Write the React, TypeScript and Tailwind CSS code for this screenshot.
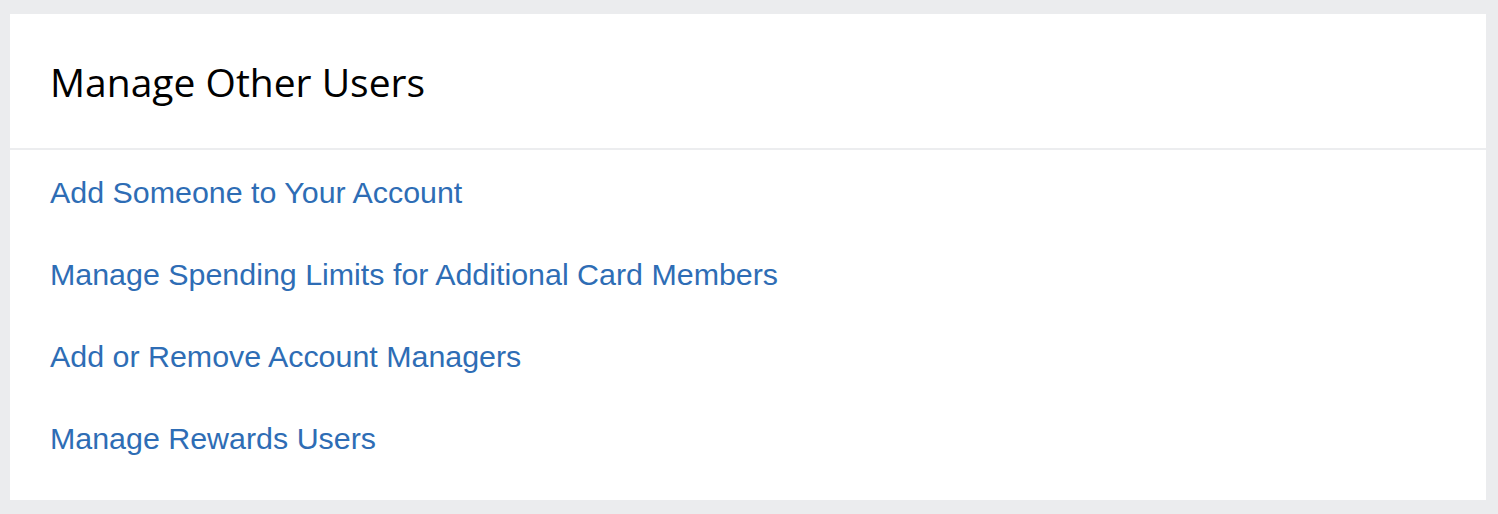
import React from "react";

const links = [
  "Add Someone to Your Account",
  "Manage Spending Limits for Additional Card Members",
  "Add or Remove Account Managers",
  "Manage Rewards Users",
];

export default function App() {
  return (
    <div className="w-[1498px] h-[514px] bg-[#ebecee] pl-[10px] pr-[12px] pt-[14px] font-['Liberation_Sans',Arial,sans-serif]">
      <div className="bg-white h-[486px] flex flex-col">
        {/* Header */}
        <div className="h-[138px] border-b-2 border-[#ecedef] flex items-center px-[40px]">
          <h2 className="text-[39px] leading-none text-black font-['Open_Sans',sans-serif] font-normal">
            Manage Other Users
          </h2>
        </div>

        {/* Links */}
        <div className="flex flex-col px-[40px] pt-[22px]">
          {links.map((label) => (
            <a
              key={label}
              href="#"
              className="h-[82px] flex items-start text-[30.4px] leading-[40px] text-[#2e6db5]"
            >
              {label}
            </a>
          ))}
        </div>
      </div>
    </div>
  );
}
